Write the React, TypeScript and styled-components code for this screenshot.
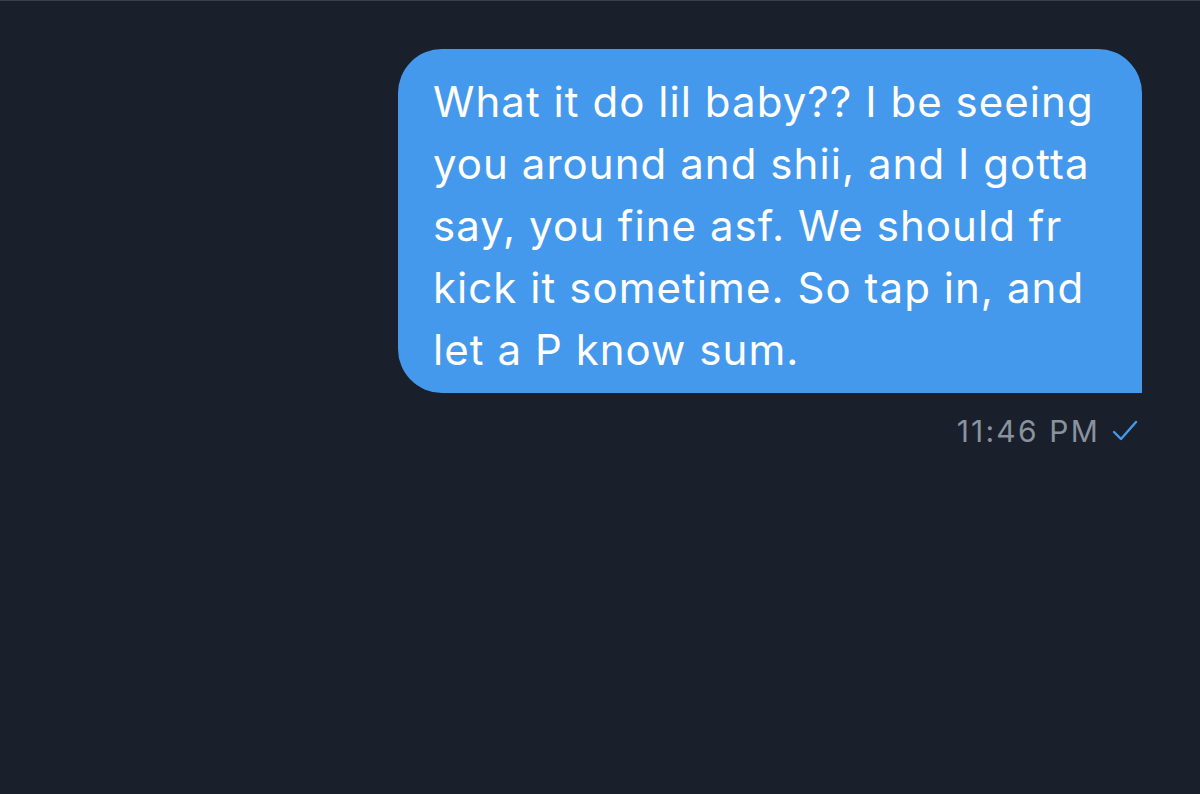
import React from "react";
import styled, { createGlobalStyle } from "styled-components";

const Global = createGlobalStyle`
  html, body { margin: 0; padding: 0; background: #1a202b; }
  body { font-family: Inter, "Noto Sans", sans-serif; }
`;

const Screen = styled.div`
  width: 1200px;
  height: 794px;
  background: #1a202b;
  border-top: 1px solid #3a404a;
  box-sizing: border-box;
  display: flex;
  flex-direction: column;
  align-items: flex-end;
  padding: 48px 58px 0 0;
  overflow: hidden;
`;

const Bubble = styled.div`
  width: 744px;
  box-sizing: border-box;
  background: #4599ec;
  color: #ffffff;
  border-radius: 44px 44px 0 44px;
  padding: 22px 30px 12px 35px;
  font-size: 42px;
  line-height: 62px;
  letter-spacing: 1.05px;
`;

const Line = styled.div`
  white-space: nowrap;
`;

const Meta = styled.div`
  display: flex;
  align-items: center;
  gap: 12px;
  margin-top: 18px;
  margin-right: 4px;
  color: #8a929e;
  font-size: 30px;
  line-height: 40px;
  letter-spacing: 2.2px;
`;

const Check = styled.svg`
  width: 26px;
  height: 22px;
`;

const lines = [
  "What it do lil baby?? I be seeing",
  "you around and shii, and I gotta",
  "say, you fine asf. We should fr",
  "kick it sometime. So tap in, and",
  "let a P know sum.",
];

export default function App() {
  return (
    <>
      <Global />
      <Screen>
        <Bubble>
          {lines.map((l) => (
            <Line key={l}>{l}</Line>
          ))}
        </Bubble>
        <Meta>
          <span>11:46 PM</span>
          <Check viewBox="0 0 26 22">
            <path d="M2 12 L9 19 L24 2" fill="none" stroke="#4599ec" strokeWidth="2.4" strokeLinecap="round" strokeLinejoin="round" />
          </Check>
        </Meta>
      </Screen>
    </>
  );
}
